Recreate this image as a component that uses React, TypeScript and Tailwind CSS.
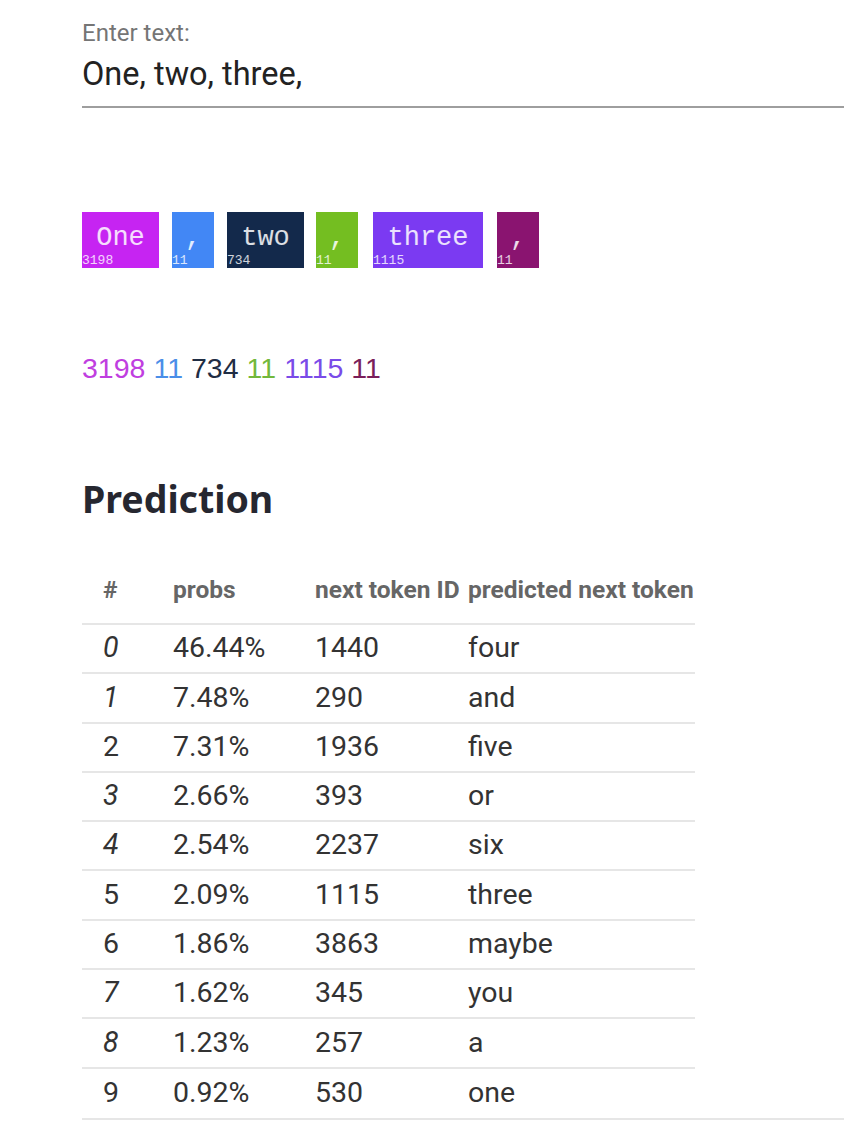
import React from 'react';

const tokens = [
  { text: 'One', id: 3198, w: 'w-[77px]', ml: 'ml-0', bg: 'bg-[#c624f2]', fg: 'text-[#c03ee0]' },
  { text: ',', id: 11, w: 'w-[42px]', ml: 'ml-[13px]', bg: 'bg-[#4287f5]', fg: 'text-[#4a8ee8]' },
  { text: 'two', id: 734, w: 'w-[77px]', ml: 'ml-[13px]', bg: 'bg-[#13294b]', fg: 'text-[#1f2d44]' },
  { text: ',', id: 11, w: 'w-[42px]', ml: 'ml-[12px]', bg: 'bg-[#74be21]', fg: 'text-[#72b83b]' },
  { text: 'three', id: 1115, w: 'w-[110px]', ml: 'ml-[15px]', bg: 'bg-[#7b3af2]', fg: 'text-[#7a4be8]' },
  { text: ',', id: 11, w: 'w-[42px]', ml: 'ml-[14px]', bg: 'bg-[#8a1470]', fg: 'text-[#7a1e5a]' },
];

const rows = [
  { i: 0, italic: true, p: '46.44%', id: 1440, tok: 'four' },
  { i: 1, italic: true, p: '7.48%', id: 290, tok: 'and' },
  { i: 2, italic: false, p: '7.31%', id: 1936, tok: 'five' },
  { i: 3, italic: true, p: '2.66%', id: 393, tok: 'or' },
  { i: 4, italic: true, p: '2.54%', id: 2237, tok: 'six' },
  { i: 5, italic: false, p: '2.09%', id: 1115, tok: 'three' },
  { i: 6, italic: false, p: '1.86%', id: 3863, tok: 'maybe' },
  { i: 7, italic: true, p: '1.62%', id: 345, tok: 'you' },
  { i: 8, italic: true, p: '1.23%', id: 257, tok: 'a' },
  { i: 9, italic: false, p: '0.92%', id: 530, tok: 'one' },
];

const cols = 'grid grid-cols-[91px_142px_153px_227px] items-center';

export default function App() {
  return (
    <div className="min-h-screen bg-white pl-[82px] pt-[19px] font-['Roboto',sans-serif]">
      {/* text input */}
      <div className="text-[24px] leading-[28px] text-[#757575]">Enter text:</div>
      <div className="mt-[7px] border-b-2 border-[#9e9e9e] pb-[11px] text-[32.5px] leading-[41px] text-[#222]">
        One, two, three,
      </div>

      {/* token boxes */}
      <div className="mt-[104px] flex">
        {tokens.map((t, k) => (
          <div
            key={k}
            className={`relative h-[56px] ${t.w} ${t.ml} ${t.bg} flex justify-center pt-[14px] font-['Liberation_Mono',monospace] text-[27px] leading-[24px] text-white/85`}
          >
            {t.text}
            <span className="absolute bottom-0 left-0 text-[13px] leading-[14px] text-white/80">{t.id}</span>
          </div>
        ))}
      </div>

      {/* token ids */}
      <div className="mt-[84px] flex gap-[8px] font-['Liberation_Sans',Arial,sans-serif] text-[28.5px] leading-[32px]">
        {tokens.map((t, k) => (
          <span key={k} className={t.fg}>{t.id}</span>
        ))}
      </div>

      <h2 className="mt-[93px] font-['Noto_Sans',sans-serif] text-[37.5px] font-bold leading-[44px] text-[#262730]">
        Prediction
      </h2>

      {/* table */}
      <div className="mt-[36px] w-[613px]">
        <div className={`${cols} h-[68px] border-b-2 border-[#e6e6e6] text-[24.5px] font-bold text-[#666]`}>
          <div className="pl-[21px]">#</div>
          <div>probs</div>
          <div className="whitespace-nowrap">next token ID</div>
          <div className="whitespace-nowrap">predicted next token</div>
        </div>
        {rows.map((r, k) => (
          <div
            key={r.i}
            className={`${cols} h-[49.3px] text-[28.5px] text-[#333] ${k < rows.length - 1 ? 'border-b-2 border-[#e6e6e6]' : ''}`}
          >
            <div className={`pl-[21px] ${r.italic ? 'italic' : ''}`}>{r.i}</div>
            <div>{r.p}</div>
            <div>{r.id}</div>
            <div>{r.tok}</div>
          </div>
        ))}
      </div>
      <div className="border-b-2 border-[#e6e6e6]" />
    </div>
  );
}
